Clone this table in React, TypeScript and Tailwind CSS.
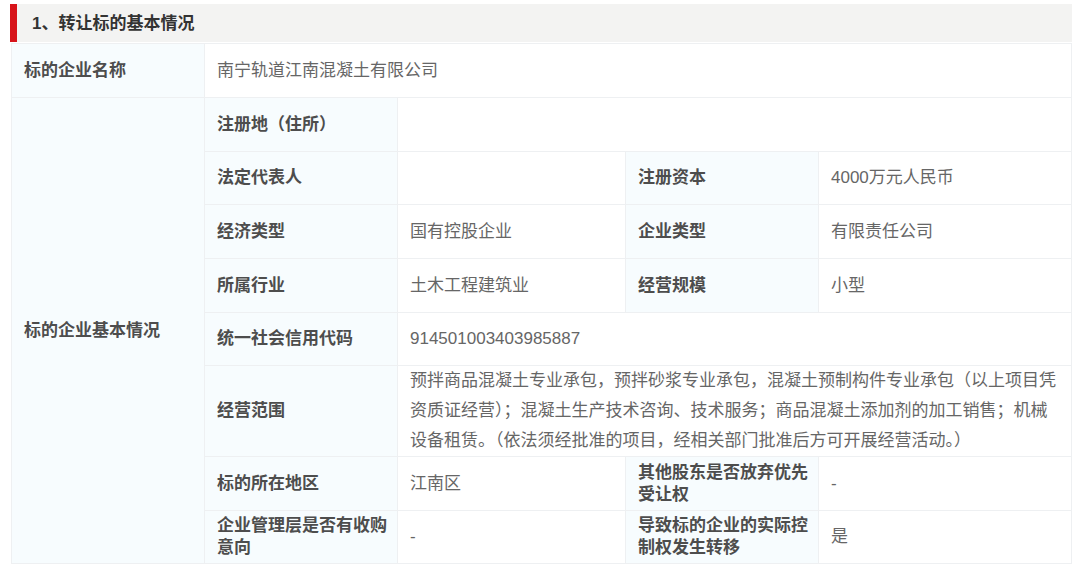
const font = { fontFamily: '"Liberation Sans", "Noto Sans CJK SC", sans-serif' };

const Label = ({ children, className = "" }: { children: React.ReactNode; className?: string }) => (
  <div
    className={`flex items-center pl-3 pr-2 bg-[#f7fcfe] border-r border-b border-[#eef0f2] font-bold text-[#4d4d4d] leading-[22px] ${className}`}
  >
    <div>{children}</div>
  </div>
);

const Value = ({ children, className = "" }: { children?: React.ReactNode; className?: string }) => (
  <div
    className={`flex items-center px-3 bg-white border-r border-b border-[#eef0f2] text-[#666] leading-[30px] ${className}`}
  >
    <div>{children}</div>
  </div>
);

export default function App() {
  return (
    <div className="w-[1080px] h-[567px] bg-white pt-1 text-[17px]" style={font}>
      {/* section header */}
      <div className="ml-[10px] w-[1062px] h-[38px] flex items-center bg-[#f3f3f2] border-l-[7px] border-[#d7141a]">
        <span className="pl-[15px] pt-px font-bold text-[#333]">1、转让标的基本情况</span>
      </div>

      <div className="ml-[11px] mt-px w-[1061px] border-l border-t border-[#eef0f2] grid grid-cols-[193px_1fr]">
        <Label className="h-[54px]">标的企业名称</Label>
        <Value className="h-[54px]">南宁轨道江南混凝土有限公司</Value>

        <Label>标的企业基本情况</Label>
        <div className="grid grid-cols-[193px_228px_193px_1fr]">
          <Label className="h-[54px]">注册地（住所）</Label>
          <Value className="h-[54px] col-span-3" />

          <Label className="h-[53px]">法定代表人</Label>
          <Value className="h-[53px]" />
          <Label className="h-[53px]">注册资本</Label>
          <Value className="h-[53px]">4000万元人民币</Value>

          <Label className="h-[54px]">经济类型</Label>
          <Value className="h-[54px]">国有控股企业</Value>
          <Label className="h-[54px]">企业类型</Label>
          <Value className="h-[54px]">有限责任公司</Value>

          <Label className="h-[54px]">所属行业</Label>
          <Value className="h-[54px]">土木工程建筑业</Value>
          <Label className="h-[54px]">经营规模</Label>
          <Value className="h-[54px]">小型</Value>

          <Label className="h-[53px]">统一社会信用代码</Label>
          <Value className="h-[53px] col-span-3">914501003403985887</Value>

          <Label className="h-[91px]">经营范围</Label>
          <Value className="h-[91px] col-span-3">
            预拌商品混凝土专业承包，预拌砂浆专业承包，混凝土预制构件专业承包（以上项目凭资质证经营）；混凝土生产技术咨询、技术服务；商品混凝土添加剂的加工销售；机械设备租赁。（依法须经批准的项目，经相关部门批准后方可开展经营活动。）
          </Value>

          <Label className="h-[54px]">标的所在地区</Label>
          <Value className="h-[54px]">江南区</Value>
          <Label className="h-[54px]">其他股东是否放弃优先受让权</Label>
          <Value className="h-[54px]">-</Value>

          <Label className="h-[53px]">企业管理层是否有收购意向</Label>
          <Value className="h-[53px]">-</Value>
          <Label className="h-[53px]">导致标的企业的实际控制权发生转移</Label>
          <Value className="h-[53px]">是</Value>
        </div>
      </div>
    </div>
  );
}
